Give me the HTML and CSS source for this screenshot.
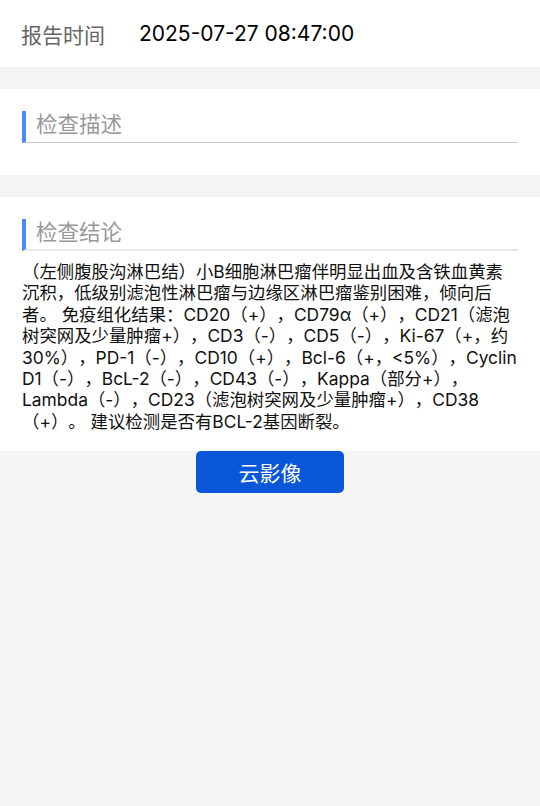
FILE: index.html
```html
<!DOCTYPE html>
<html lang="zh-CN">
<head>
<meta charset="utf-8">
<link rel="stylesheet" href="styles.css">
</head>
<body>
<div class="page">
  <div class="time-row">
    <span class="time-label">报告时间</span>
    <span class="time-value">2025-07-27 08:47:00</span>
  </div>
  <div class="band"></div>
  <section class="card card-empty">
    <div class="card-title">检查描述</div>
  </section>
  <div class="band"></div>
  <section class="card card-text">
    <div class="card-title card-title-light">检查结论</div>
    <p class="card-body">（左侧腹股沟淋巴结）小B细胞淋巴瘤伴明显出血及含铁血黄素沉积，低级别滤泡性淋巴瘤与边缘区淋巴瘤鉴别困难，倾向后者。 免疫组化结果：CD20（+），CD79α（+），CD21（滤泡树突网及少量肿瘤+），CD3（-），CD5（-），Ki-67（+，约30%），PD-1（-），CD10（+），Bcl-6（+，&lt;5%），Cyclin D1（-），BcL-2（-），CD43（-），Kappa（部分+），Lambda（-），CD23（滤泡树突网及少量肿瘤+），CD38（+）。 建议检测是否有BCL-2基因断裂。</p>
  </section>
  <div class="actions">
    <button class="cloud-btn" type="button">云影像</button>
  </div>
</div>
</body>
</html>
```
FILE: styles.css
```css
html, body {
  margin: 0;
  padding: 0;
  background: #f5f5f5;
}
body {
  font-family: "Inter", "Noto Sans CJK SC", sans-serif;
  text-spacing-trim: space-all;
  min-height: 806px;
}
.page {
  width: 540px;
}
.time-row {
  height: 67px;
  background: #fff;
  display: flex;
  align-items: center;
  padding: 0 21px;
  box-sizing: border-box;
}
.time-label {
  font-size: 21px;
  color: #666;
  width: 118px;
  flex: none;
}
.time-value {
  font-size: 21px;
  color: #000;
}
.band {
  height: 22px;
  background: #f4f4f4;
}
.card {
  background: #fff;
  padding: 22px 22px 0 22px;
}
.card-empty {
  height: 64px;
}
.card-text {
  padding-bottom: 19px;
}
.card-title {
  height: 31px;
  line-height: 27px;
  font-size: 21.5px;
  color: #999;
  border-left: 4px solid #4a8af4;
  border-bottom: 1px solid #cbcbcb;
  padding-left: 10px;
}
.card-title-light {
  border-bottom: 2px solid #e6e6e6;
  height: 30px;
}
.card-body {
  margin: 10px 0 0 0;
  font-size: 17.4px;
  line-height: 21.4px;
  color: #111;
}
.actions {
  display: flex;
  justify-content: center;
}
.cloud-btn {
  width: 148px;
  height: 42px;
  border: none;
  border-radius: 5px;
  background: #0a56d8;
  color: #fff;
  font-family: "Noto Sans CJK SC", sans-serif;
  font-size: 21px;
  padding: 0;
}
```
